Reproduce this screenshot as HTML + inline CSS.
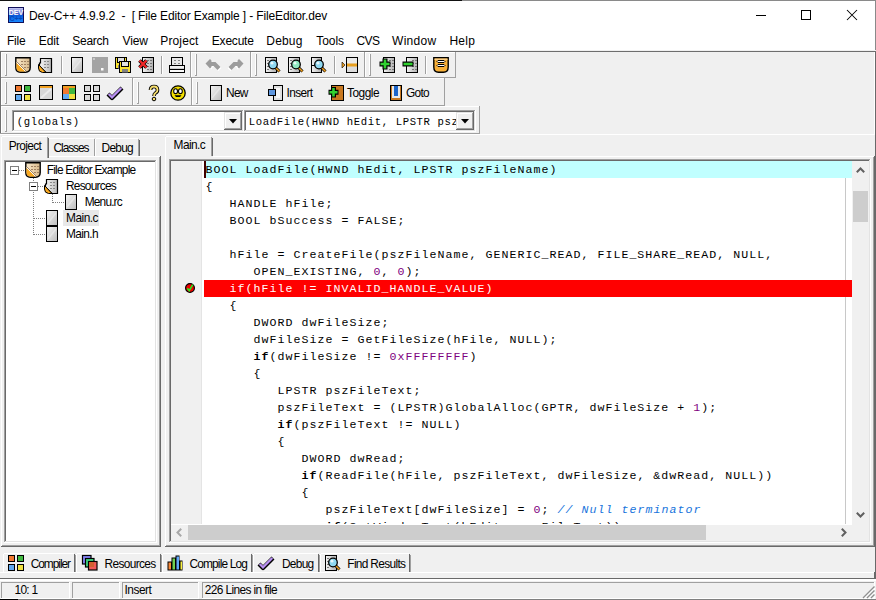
<!DOCTYPE html>
<html><head><meta charset="utf-8">
<style>
*{margin:0;padding:0;box-sizing:border-box}
html,body{width:876px;height:600px;overflow:hidden;background:#f0f0f0;font-family:"Liberation Sans",sans-serif;color:#000}
.a{position:absolute}
.mono{font-family:"Liberation Mono",monospace;white-space:pre}
svg{position:absolute;overflow:visible}
.k{font-weight:bold}
.n{color:#800080}
.c{color:#1874dc;font-style:italic}
</style></head><body>

<div class="a" style="left:0px;top:0px;width:462px;height:1px;background:#111;"></div>
<div class="a" style="left:462px;top:0px;width:414px;height:1px;background:#8a8a8a;"></div>
<div class="a" style="left:0px;top:1px;width:876px;height:50px;background:#fff;"></div>
<div class="a" style="left:875px;top:0px;width:1px;height:52px;background:#8a8a8a;"></div>
<svg style="left:8px;top:7px" width="16" height="16" viewBox="0 0 16 16"><defs><linearGradient id="ti1" x1="0" y1="0" x2="0" y2="1"><stop offset="0" stop-color="#c8c8f4"/><stop offset="1" stop-color="#2a48c0"/></linearGradient><linearGradient id="ti2" x1="0" y1="0" x2="0" y2="1"><stop offset="0" stop-color="#0a58d8"/><stop offset="1" stop-color="#1888ff"/></linearGradient></defs><rect x="0.5" y="0.5" width="15" height="15" fill="#10106a" stroke="#10105a"/><rect x="1" y="1" width="14" height="7" fill="url(#ti1)"/><rect x="1" y="8" width="14" height="7" fill="url(#ti2)"/><text x="8" y="7.6" text-anchor="middle" font-family="Liberation Sans" font-weight="bold" font-size="7" fill="#fff">DEV</text><text x="8" y="14" text-anchor="middle" font-family="Liberation Sans" font-weight="bold" font-size="7" fill="#0848b8">C++</text></svg>
<div class="a" style="left:29px;top:8.84px;font-size:12px;line-height:14px;white-space:pre;color:#000;letter-spacing:-0.134px;">Dev-C++ 4.9.9.2  -  [ File Editor Example ] - FileEditor.dev</div>
<div class="a" style="left:756px;top:15px;width:10px;height:1px;background:#000;"></div>
<div class="a" style="left:801px;top:10px;width:10px;height:10px;background:transparent;border:1px solid #000"></div>
<svg style="left:847px;top:10px" width="10" height="10" viewBox="0 0 10 10"><path d="M0 0L10 10M10 0L0 10" stroke="#000" stroke-width="1.05"/></svg>
<div class="a" style="left:6.9px;top:33.84px;font-size:12px;line-height:14px;white-space:pre;color:#000;letter-spacing:-0.186px;">File</div>
<div class="a" style="left:38.800000000000004px;top:33.84px;font-size:12px;line-height:14px;white-space:pre;color:#000;letter-spacing:-0.113px;">Edit</div>
<div class="a" style="left:72.3px;top:33.84px;font-size:12px;line-height:14px;white-space:pre;color:#000;letter-spacing:-0.259px;">Search</div>
<div class="a" style="left:122.5px;top:33.84px;font-size:12px;line-height:14px;white-space:pre;color:#000;letter-spacing:-0.134px;">View</div>
<div class="a" style="left:160.29999999999998px;top:33.84px;font-size:12px;line-height:14px;white-space:pre;color:#000;letter-spacing:0.128px;">Project</div>
<div class="a" style="left:211.8px;top:33.84px;font-size:12px;line-height:14px;white-space:pre;color:#000;letter-spacing:-0.206px;">Execute</div>
<div class="a" style="left:266.3px;top:33.84px;font-size:12px;line-height:14px;white-space:pre;color:#000;letter-spacing:0.170px;">Debug</div>
<div class="a" style="left:316.2px;top:33.84px;font-size:12px;line-height:14px;white-space:pre;color:#000;letter-spacing:-0.040px;">Tools</div>
<div class="a" style="left:356.4px;top:33.84px;font-size:12px;line-height:14px;white-space:pre;color:#000;letter-spacing:-0.583px;">CVS</div>
<div class="a" style="left:392.0px;top:33.84px;font-size:12px;line-height:14px;white-space:pre;color:#000;letter-spacing:0.316px;">Window</div>
<div class="a" style="left:449.4px;top:33.84px;font-size:12px;line-height:14px;white-space:pre;color:#000;letter-spacing:0.287px;">Help</div>
<div class="a" style="left:0px;top:50px;width:876px;height:1px;background:#f0f0f0;"></div>
<div class="a" style="left:0px;top:51px;width:876px;height:1px;background:#6e6e6e;"></div>
<div class="a" style="left:0px;top:52px;width:876px;height:82px;background:#f0f0f0;"></div>
<div class="a" style="left:874px;top:52px;width:1px;height:83px;background:#fff;"></div>
<div class="a" style="left:875px;top:52px;width:1px;height:83px;background:#6a6a6a;"></div>
<div class="a" style="left:0px;top:51px;width:1px;height:83px;background:#6e6e6e;"></div>
<div class="a" style="left:1px;top:52px;width:190px;height:1px;background:#fff;"></div>
<div class="a" style="left:1px;top:52px;width:1px;height:26px;background:#fff;"></div>
<div class="a" style="left:1px;top:77px;width:190px;height:1px;background:#a0a0a0;"></div>
<div class="a" style="left:190px;top:52px;width:1px;height:26px;background:#a0a0a0;"></div>
<div class="a" style="left:191px;top:52px;width:60px;height:1px;background:#fff;"></div>
<div class="a" style="left:191px;top:52px;width:1px;height:26px;background:#fff;"></div>
<div class="a" style="left:191px;top:77px;width:60px;height:1px;background:#a0a0a0;"></div>
<div class="a" style="left:250px;top:52px;width:1px;height:26px;background:#a0a0a0;"></div>
<div class="a" style="left:251px;top:52px;width:114px;height:1px;background:#fff;"></div>
<div class="a" style="left:251px;top:52px;width:1px;height:26px;background:#fff;"></div>
<div class="a" style="left:251px;top:77px;width:114px;height:1px;background:#a0a0a0;"></div>
<div class="a" style="left:364px;top:52px;width:1px;height:26px;background:#a0a0a0;"></div>
<div class="a" style="left:365px;top:52px;width:91px;height:1px;background:#fff;"></div>
<div class="a" style="left:365px;top:52px;width:1px;height:26px;background:#fff;"></div>
<div class="a" style="left:365px;top:77px;width:91px;height:1px;background:#a0a0a0;"></div>
<div class="a" style="left:455px;top:52px;width:1px;height:26px;background:#a0a0a0;"></div>
<div class="a" style="left:5px;top:54px;width:1px;height:22px;background:#fff;"></div>
<div class="a" style="left:6px;top:54px;width:1px;height:22px;background:#a0a0a0;"></div>
<div class="a" style="left:5px;top:75px;width:2px;height:1px;background:#a0a0a0;"></div>
<div class="a" style="left:5px;top:54px;width:1px;height:1px;background:#fff;"></div>
<div class="a" style="left:195px;top:54px;width:1px;height:22px;background:#fff;"></div>
<div class="a" style="left:196px;top:54px;width:1px;height:22px;background:#a0a0a0;"></div>
<div class="a" style="left:195px;top:75px;width:2px;height:1px;background:#a0a0a0;"></div>
<div class="a" style="left:195px;top:54px;width:1px;height:1px;background:#fff;"></div>
<div class="a" style="left:255px;top:54px;width:1px;height:22px;background:#fff;"></div>
<div class="a" style="left:256px;top:54px;width:1px;height:22px;background:#a0a0a0;"></div>
<div class="a" style="left:255px;top:75px;width:2px;height:1px;background:#a0a0a0;"></div>
<div class="a" style="left:255px;top:54px;width:1px;height:1px;background:#fff;"></div>
<div class="a" style="left:369px;top:54px;width:1px;height:22px;background:#fff;"></div>
<div class="a" style="left:370px;top:54px;width:1px;height:22px;background:#a0a0a0;"></div>
<div class="a" style="left:369px;top:75px;width:2px;height:1px;background:#a0a0a0;"></div>
<div class="a" style="left:369px;top:54px;width:1px;height:1px;background:#fff;"></div>
<div class="a" style="left:1px;top:78px;width:132px;height:1px;background:#fff;"></div>
<div class="a" style="left:1px;top:78px;width:1px;height:28px;background:#fff;"></div>
<div class="a" style="left:1px;top:105px;width:132px;height:1px;background:#a0a0a0;"></div>
<div class="a" style="left:132px;top:78px;width:1px;height:28px;background:#a0a0a0;"></div>
<div class="a" style="left:133px;top:78px;width:59px;height:1px;background:#fff;"></div>
<div class="a" style="left:133px;top:78px;width:1px;height:28px;background:#fff;"></div>
<div class="a" style="left:133px;top:105px;width:59px;height:1px;background:#a0a0a0;"></div>
<div class="a" style="left:191px;top:78px;width:1px;height:28px;background:#a0a0a0;"></div>
<div class="a" style="left:192px;top:78px;width:253px;height:1px;background:#fff;"></div>
<div class="a" style="left:192px;top:78px;width:1px;height:28px;background:#fff;"></div>
<div class="a" style="left:192px;top:105px;width:253px;height:1px;background:#a0a0a0;"></div>
<div class="a" style="left:444px;top:78px;width:1px;height:28px;background:#a0a0a0;"></div>
<div class="a" style="left:5px;top:82px;width:1px;height:22px;background:#fff;"></div>
<div class="a" style="left:6px;top:82px;width:1px;height:22px;background:#a0a0a0;"></div>
<div class="a" style="left:5px;top:103px;width:2px;height:1px;background:#a0a0a0;"></div>
<div class="a" style="left:5px;top:82px;width:1px;height:1px;background:#fff;"></div>
<div class="a" style="left:137px;top:82px;width:1px;height:22px;background:#fff;"></div>
<div class="a" style="left:138px;top:82px;width:1px;height:22px;background:#a0a0a0;"></div>
<div class="a" style="left:137px;top:103px;width:2px;height:1px;background:#a0a0a0;"></div>
<div class="a" style="left:137px;top:82px;width:1px;height:1px;background:#fff;"></div>
<div class="a" style="left:196px;top:82px;width:1px;height:22px;background:#fff;"></div>
<div class="a" style="left:197px;top:82px;width:1px;height:22px;background:#a0a0a0;"></div>
<div class="a" style="left:196px;top:103px;width:2px;height:1px;background:#a0a0a0;"></div>
<div class="a" style="left:196px;top:82px;width:1px;height:1px;background:#fff;"></div>
<div class="a" style="left:1px;top:106px;width:479px;height:1px;background:#fff;"></div>
<div class="a" style="left:1px;top:106px;width:1px;height:28px;background:#fff;"></div>
<div class="a" style="left:1px;top:133px;width:479px;height:1px;background:#a0a0a0;"></div>
<div class="a" style="left:479px;top:106px;width:1px;height:28px;background:#a0a0a0;"></div>
<div class="a" style="left:5px;top:110px;width:1px;height:22px;background:#fff;"></div>
<div class="a" style="left:6px;top:110px;width:1px;height:22px;background:#a0a0a0;"></div>
<div class="a" style="left:5px;top:131px;width:2px;height:1px;background:#a0a0a0;"></div>
<div class="a" style="left:5px;top:110px;width:1px;height:1px;background:#fff;"></div>
<div class="a" style="left:0px;top:133px;width:480px;height:1px;background:#a0a0a0;"></div>
<div class="a" style="left:0px;top:134px;width:874px;height:1px;background:#fff;"></div>
<div class="a" style="left:61px;top:56px;width:1px;height:18px;background:#a0a0a0;"></div>
<div class="a" style="left:62px;top:56px;width:1px;height:18px;background:#fff;"></div>
<div class="a" style="left:161px;top:56px;width:1px;height:18px;background:#a0a0a0;"></div>
<div class="a" style="left:162px;top:56px;width:1px;height:18px;background:#fff;"></div>
<div class="a" style="left:334px;top:56px;width:1px;height:18px;background:#a0a0a0;"></div>
<div class="a" style="left:335px;top:56px;width:1px;height:18px;background:#fff;"></div>
<div class="a" style="left:425px;top:56px;width:1px;height:18px;background:#a0a0a0;"></div>
<div class="a" style="left:426px;top:56px;width:1px;height:18px;background:#fff;"></div>
<svg style="left:15px;top:57px" width="16" height="16" viewBox="0 0 16 16"><defs><linearGradient id="g1" x1="0" y1="0" x2="1" y2="0"><stop offset="0" stop-color="#fcecd0"/><stop offset="1" stop-color="#d8b888"/></linearGradient></defs><path d="M0.8 0.8H15.2V10.5Q15.2 15.2 10.5 15.2H5.5Q0.8 15.2 0.8 10.5Z" fill="url(#g1)" stroke="#000" stroke-width="1.4"/><path d="M1.5 5.5L10.5 14.6H5.5Q1.5 14.6 1.5 10.5Z" fill="#f8a820"/><path d="M1.5 5.5L10.5 14.5" stroke="#fff" stroke-width="0.9"/><path d="M1.5 4.5L11 14" stroke="#806040" stroke-width="0.7"/><rect x="6" y="4" width="2" height="1" fill="#a08060"/><rect x="9" y="4" width="2" height="1" fill="#a08060"/><rect x="6" y="7" width="2" height="1" fill="#a08060"/><rect x="9" y="7" width="2" height="1" fill="#a08060"/><rect x="9" y="10" width="2" height="1" fill="#a08060"/><rect x="12" y="10" width="2" height="1" fill="#a08060"/><rect x="12" y="4" width="2" height="1" fill="#a08060"/><rect x="12" y="7" width="2" height="1" fill="#a08060"/></svg>
<svg style="left:37px;top:57px" width="16" height="16" viewBox="0 0 16 16"><defs><linearGradient id="g2" x1="0" y1="0" x2="1" y2="0"><stop offset="0" stop-color="#f8f8f8"/><stop offset="1" stop-color="#b8b8b8"/></linearGradient></defs><path d="M3.5 1.5H14.5V15.5H9L2.5 9.5V6H3.5Z" fill="url(#g2)" stroke="#000" stroke-width="1.2"/><path d="M1.5 7.5L9 15.5H5.5Q1.5 15 1.5 11Z" fill="#f8a820" stroke="#000" stroke-width="1"/><rect x="7" y="4" width="2" height="1" fill="#888"/><rect x="10" y="4" width="2" height="1" fill="#888"/><rect x="7" y="7" width="2" height="1" fill="#888"/><rect x="10" y="7" width="2" height="1" fill="#888"/><rect x="7" y="10" width="2" height="1" fill="#888"/><rect x="10" y="10" width="2" height="1" fill="#888"/></svg>
<svg style="left:71px;top:57px" width="12" height="16" viewBox="0 0 12 16"><defs><linearGradient id="g3" x1="0" y1="0" x2="1" y2="1"><stop offset="0" stop-color="#f4f4f4"/><stop offset="1" stop-color="#bcbcbc"/></linearGradient></defs><rect x="0.5" y="0.5" width="11" height="15" fill="url(#g3)" stroke="#000"/><path d="M2 13 L10 3" stroke="#fff" stroke-opacity="0.35" stroke-width="1.5"/></svg>
<svg style="left:92px;top:57px" width="16" height="16" viewBox="0 0 16 16"><rect x="0" y="0" width="16" height="16" fill="#a4a4a4"/><rect x="9" y="11" width="2.5" height="2.5" fill="#fff"/><rect x="1" y="1" width="2" height="2" fill="#c8c8c8"/></svg>
<svg style="left:115px;top:57px" width="16" height="16" viewBox="0 0 16 16"><rect x="0.5" y="0.5" width="11" height="11" fill="#f8e030" stroke="#000"/><rect x="2.5" y="0.5" width="7" height="5" fill="#e0e0e0" stroke="#000"/><rect x="3" y="8" width="6" height="3.5" fill="#808080"/><rect x="4.5" y="4.5" width="11" height="11" fill="#f8e030" stroke="#000"/><rect x="6.5" y="4.5" width="7" height="5" fill="#e0e0e0" stroke="#000"/><rect x="7" y="12" width="6" height="3.5" fill="#808080"/></svg>
<svg style="left:138px;top:57px" width="16" height="16" viewBox="0 0 16 16"><defs><linearGradient id="g4" x1="0" y1="0" x2="1" y2="0"><stop offset="0" stop-color="#f4f4f4"/><stop offset="1" stop-color="#b0b0b0"/></linearGradient></defs><rect x="4.5" y="0.5" width="11" height="15" fill="url(#g4)" stroke="#000"/><rect x="9" y="3" width="2" height="1" fill="#777"/><rect x="12" y="3" width="2" height="1" fill="#777"/><rect x="9" y="6" width="2" height="1" fill="#777"/><rect x="12" y="6" width="2" height="1" fill="#777"/><rect x="9" y="9" width="2" height="1" fill="#777"/><rect x="12" y="9" width="2" height="1" fill="#777"/><rect x="9" y="12" width="2" height="1" fill="#777"/><rect x="12" y="12" width="2" height="1" fill="#777"/><path d="M1.5 3.5L8.5 10.5M8.5 3.5L1.5 10.5" stroke="#000" stroke-width="3.8"/><path d="M1.5 3.5L8.5 10.5M8.5 3.5L1.5 10.5" stroke="#f02828" stroke-width="2.4"/></svg>
<svg style="left:169px;top:57px" width="16" height="16" viewBox="0 0 16 16"><rect x="2.5" y="0.5" width="11" height="8" fill="#e8e8e8" stroke="#000"/><rect x="5" y="3" width="2" height="1" fill="#888"/><rect x="9" y="3" width="2" height="1" fill="#888"/><rect x="5" y="6" width="2" height="1" fill="#888"/><rect x="9" y="6" width="2" height="1" fill="#888"/><rect x="0.5" y="8.5" width="15" height="7" fill="#d0d0d0" stroke="#000"/><rect x="1" y="9" width="14" height="2" fill="#f0f0f0"/><rect x="1" y="12" width="14" height="1" fill="#000"/><rect x="1" y="13" width="14" height="2" fill="#fafafa"/></svg>
<svg style="left:205px;top:57px" width="17" height="14" viewBox="0 0 17 14"><g ><path d="M0.5 6.5L5 2L6.5 3.5V5H10.5L15.5 10L12.5 13L8.5 9H6.5V10L5 11.5Z" fill="#fff" transform="translate(1,1)"/><path d="M0.5 6.5L5 2L6.5 3.5V5H10.5L15.5 10L12.5 13L8.5 9H6.5V10L5 11.5Z" fill="#9c9c9c"/></g></svg>
<svg style="left:228px;top:57px" width="17" height="14" viewBox="0 0 17 14"><g transform="translate(16,0) scale(-1,1)"><path d="M0.5 6.5L5 2L6.5 3.5V5H10.5L15.5 10L12.5 13L8.5 9H6.5V10L5 11.5Z" fill="#fff" transform="translate(1,1)"/><path d="M0.5 6.5L5 2L6.5 3.5V5H10.5L15.5 10L12.5 13L8.5 9H6.5V10L5 11.5Z" fill="#9c9c9c"/></g></svg>
<svg style="left:265px;top:57px" width="16" height="16" viewBox="0 0 16 16"><defs><linearGradient id="g5" x1="0" y1="0" x2="1" y2="0"><stop offset="0" stop-color="#f4f4f4"/><stop offset="1" stop-color="#b0b0b0"/></linearGradient></defs><rect x="0.5" y="0.5" width="11" height="15" fill="url(#g5)" stroke="#000"/><rect x="2" y="3" width="2" height="1" fill="#777"/><rect x="2" y="6" width="2" height="1" fill="#777"/><rect x="2" y="9" width="2" height="1" fill="#777"/><rect x="2" y="12" width="2" height="1" fill="#777"/><path d="M10 10L14.5 14.5" stroke="#000" stroke-width="3"/><path d="M10 10L14.5 14.5" stroke="#f0a020" stroke-width="1.6"/><circle cx="8" cy="7.5" r="4.3" fill="#8fd8f0" stroke="#000" stroke-width="1.3"/><circle cx="7" cy="6.2" r="1.4" fill="#fff" opacity="0.8"/></svg>
<svg style="left:288px;top:57px" width="16" height="16" viewBox="0 0 16 16"><defs><linearGradient id="g6" x1="0" y1="0" x2="1" y2="0"><stop offset="0" stop-color="#f4f4f4"/><stop offset="1" stop-color="#b0b0b0"/></linearGradient></defs><rect x="0.5" y="0.5" width="11" height="15" fill="url(#g6)" stroke="#000"/><rect x="2" y="3" width="2" height="1" fill="#777"/><rect x="2" y="6" width="2" height="1" fill="#777"/><rect x="2" y="9" width="2" height="1" fill="#777"/><rect x="2" y="12" width="2" height="1" fill="#777"/><path d="M10 10L14.5 14.5" stroke="#000" stroke-width="3"/><path d="M10 10L14.5 14.5" stroke="#f0a020" stroke-width="1.6"/><circle cx="8" cy="7.5" r="4.3" fill="#90e8c0" stroke="#000" stroke-width="1.3"/><circle cx="7" cy="6.2" r="1.4" fill="#fff" opacity="0.8"/></svg>
<svg style="left:311px;top:57px" width="16" height="16" viewBox="0 0 16 16"><defs><linearGradient id="g7" x1="0" y1="0" x2="1" y2="0"><stop offset="0" stop-color="#f4f4f4"/><stop offset="1" stop-color="#b0b0b0"/></linearGradient></defs><rect x="0.5" y="0.5" width="10" height="8" fill="url(#g7)" stroke="#000"/><rect x="0.5" y="8.5" width="10" height="7" fill="url(#g7)" stroke="#000"/><path d="M10 10L14.5 14.5" stroke="#000" stroke-width="3"/><path d="M10 10L14.5 14.5" stroke="#f0a020" stroke-width="1.6"/><circle cx="8" cy="7.5" r="4.3" fill="#8fd8f0" stroke="#000" stroke-width="1.3"/><circle cx="7" cy="6.2" r="1.4" fill="#fff" opacity="0.8"/></svg>
<svg style="left:342px;top:57px" width="16" height="16" viewBox="0 0 16 16"><path d="M0 5L3 8L0 11Z" fill="#f0a020" stroke="#000" stroke-width="0.6"/><rect x="4.5" y="0.5" width="11" height="15" fill="#e6e6e6" stroke="#000"/><rect x="5" y="7" width="10" height="2" fill="#f0a020"/><rect x="5" y="1" width="10" height="5" fill="#eaeaea"/><rect x="5" y="9" width="10" height="6" fill="#dcdcdc"/><rect x="5" y="6.5" width="10" height="3" fill="#e8a020"/></svg>
<svg style="left:379px;top:57px" width="16" height="16" viewBox="0 0 16 16"><defs><linearGradient id="g8" x1="0" y1="0" x2="1" y2="0"><stop offset="0" stop-color="#f4f4f4"/><stop offset="1" stop-color="#b0b0b0"/></linearGradient></defs><rect x="4.5" y="0.5" width="11" height="15" fill="url(#g8)" stroke="#000"/><rect x="10" y="3" width="2" height="1" fill="#777"/><rect x="13" y="3" width="2" height="1" fill="#777"/><rect x="10" y="6" width="2" height="1" fill="#777"/><rect x="13" y="6" width="2" height="1" fill="#777"/><rect x="10" y="9" width="2" height="1" fill="#777"/><rect x="13" y="9" width="2" height="1" fill="#777"/><rect x="10" y="12" width="2" height="1" fill="#777"/><rect x="13" y="12" width="2" height="1" fill="#777"/><path d="M6 1.5V12.5M0.5 7H11.5" stroke="#000" stroke-width="5"/><path d="M6 2.5V11.5M1.5 7H10.5" stroke="#30d030" stroke-width="2.6"/></svg>
<svg style="left:402px;top:57px" width="16" height="16" viewBox="0 0 16 16"><defs><linearGradient id="g9" x1="0" y1="0" x2="1" y2="0"><stop offset="0" stop-color="#f4f4f4"/><stop offset="1" stop-color="#b0b0b0"/></linearGradient></defs><rect x="4.5" y="0.5" width="11" height="15" fill="url(#g9)" stroke="#000"/><rect x="10" y="3" width="2" height="1" fill="#777"/><rect x="13" y="3" width="2" height="1" fill="#777"/><rect x="10" y="6" width="2" height="1" fill="#777"/><rect x="13" y="6" width="2" height="1" fill="#777"/><rect x="10" y="9" width="2" height="1" fill="#777"/><rect x="13" y="9" width="2" height="1" fill="#777"/><rect x="10" y="12" width="2" height="1" fill="#777"/><rect x="13" y="12" width="2" height="1" fill="#777"/><path d="M0.5 7H11.5" stroke="#000" stroke-width="5"/><path d="M1.5 7H10.5" stroke="#30d030" stroke-width="2.6"/></svg>
<svg style="left:433px;top:57px" width="16" height="16" viewBox="0 0 16 16"><path d="M0.8 0.8H15.2V10Q15.2 15.2 10.5 15.2H5.5Q0.8 15.2 0.8 10Z" fill="#f8b038" stroke="#000" stroke-width="1.4"/><path d="M1.5 1.5H14.5V3H1.5Z" fill="#fcd088"/><path d="M4 4.5L5 3.5H11L12 4.5L11 5.5H5Z" fill="#fff" stroke="#000" stroke-width="1"/><path d="M4 8.5L5 7.5H11L12 8.5L11 9.5H5Z" fill="#fff" stroke="#000" stroke-width="1"/></svg>
<svg style="left:15px;top:85px" width="16" height="16" viewBox="0 0 16 16"><rect x="0.5" y="0.5" width="6" height="6" fill="#f07830" stroke="#000"/><rect x="9.5" y="0.5" width="6" height="6" fill="#40b840" stroke="#000"/><rect x="0.5" y="9.5" width="6" height="6" fill="#60a8f0" stroke="#000"/><rect x="9.5" y="9.5" width="6" height="6" fill="#f0e040" stroke="#000"/></svg>
<svg style="left:39px;top:85px" width="14" height="15" viewBox="0 0 14 15"><rect x="0.5" y="0.5" width="13" height="14" fill="#d8d8d8" stroke="#000"/><rect x="1" y="1" width="12" height="2" fill="#f0a020"/><path d="M2 13L12 4" stroke="#fff" stroke-opacity="0.5" stroke-width="2"/></svg>
<svg style="left:62px;top:85px" width="14" height="15" viewBox="0 0 14 15"><rect x="0.5" y="0.5" width="13" height="14" fill="#d8d8d8" stroke="#000"/><rect x="1" y="1" width="12" height="2" fill="#f0a020"/><rect x="1" y="3" width="6" height="6" fill="#f07830"/><rect x="7" y="3" width="6" height="6" fill="#40b840"/><rect x="1" y="9" width="6" height="5" fill="#60a8f0"/><rect x="7" y="9" width="6" height="5" fill="#f0e040"/></svg>
<svg style="left:84px;top:85px" width="16" height="16" viewBox="0 0 16 16"><rect x="0.5" y="0.5" width="6" height="6" fill="#d8d8d8" stroke="#000"/><rect x="9.5" y="0.5" width="6" height="6" fill="#d8d8d8" stroke="#000"/><rect x="0.5" y="9.5" width="6" height="6" fill="#d8d8d8" stroke="#000"/><rect x="9.5" y="9.5" width="6" height="6" fill="#d8d8d8" stroke="#000"/></svg>
<svg style="left:107px;top:85px" width="16" height="16" viewBox="0 0 16 16"><path d="M1 9L5 13L15 3" fill="none" stroke="#000" stroke-width="4.2" stroke-linejoin="round"/><path d="M1.7 9L5 12.3L14.3 3" fill="none" stroke="#b890f0" stroke-width="2.4"/></svg>
<svg style="left:148px;top:85px" width="12" height="16" viewBox="0 0 12 16"><path d="M2.5 5Q2.5 1.5 6 1.5Q9.5 1.5 9.5 5Q9.5 7 7.5 8Q6 9 6 11" fill="none" stroke="#000" stroke-width="3.6"/><path d="M2.5 5Q2.5 1.5 6 1.5Q9.5 1.5 9.5 5Q9.5 7 7.5 8Q6 9 6 11" fill="none" stroke="#f8e070" stroke-width="1.8"/><circle cx="6" cy="14" r="1.8" fill="#f8e070" stroke="#000" stroke-width="1"/></svg>
<svg style="left:170px;top:85px" width="16" height="16" viewBox="0 0 16 16"><circle cx="8" cy="8" r="7.2" fill="#f4e000" stroke="#000" stroke-width="1.3"/><ellipse cx="5.6" cy="6.2" rx="1.9" ry="2.4" fill="#fff" stroke="#000" stroke-width="1.1"/><ellipse cx="10.4" cy="6.2" rx="1.9" ry="2.4" fill="#fff" stroke="#000" stroke-width="1.1"/><path d="M4.5 10.2H11.5L10 12H6Z" fill="#000"/></svg>
<svg style="left:210px;top:85px" width="12" height="16" viewBox="0 0 12 16"><defs><linearGradient id="g10" x1="0" y1="0" x2="1" y2="1"><stop offset="0" stop-color="#f4f4f4"/><stop offset="1" stop-color="#bcbcbc"/></linearGradient></defs><rect x="0.5" y="0.5" width="11" height="15" fill="url(#g10)" stroke="#000"/><path d="M2 13 L10 3" stroke="#fff" stroke-opacity="0.35" stroke-width="1.5"/></svg>
<div class="a" style="left:226px;top:85.87px;font-size:11.9px;line-height:14px;white-space:pre;color:#000;letter-spacing:-0.699px;">New</div>
<svg style="left:268px;top:85px" width="16" height="16" viewBox="0 0 16 16"><rect x="5.5" y="0.5" width="9" height="15" fill="#e0e0e0" stroke="#000"/><rect x="8" y="3" width="4" height="10" fill="#f8f8f8"/><rect x="0.5" y="4.5" width="7" height="6" fill="#6098e0" stroke="#000"/></svg>
<div class="a" style="left:286.5px;top:85.87px;font-size:11.9px;line-height:14px;white-space:pre;color:#000;letter-spacing:-0.620px;">Insert</div>
<svg style="left:328px;top:85px" width="16" height="16" viewBox="0 0 16 16"><rect x="3.5" y="0.5" width="12" height="15" fill="#c87820" stroke="#000"/><path d="M5.5 2V12.5M0.5 7.2H10.5" stroke="#000" stroke-width="5"/><path d="M5.5 3V11.5M1.5 7.2H9.5" stroke="#30d030" stroke-width="2.6"/></svg>
<div class="a" style="left:347px;top:85.87px;font-size:11.9px;line-height:14px;white-space:pre;color:#000;letter-spacing:-0.505px;">Toggle</div>
<svg style="left:390px;top:85px" width="12" height="16" viewBox="0 0 12 16"><rect x="0.5" y="0.5" width="11" height="15" fill="#c87820" stroke="#000"/><rect x="2" y="1" width="8" height="12" fill="#e8e8e8"/><rect x="4" y="1" width="4" height="10" fill="#1c64c8"/></svg>
<div class="a" style="left:406px;top:85.87px;font-size:11.9px;line-height:14px;white-space:pre;color:#000;letter-spacing:-0.741px;">Goto</div>
<div class="a" style="left:12px;top:110px;width:232px;height:22px;background:#fff;"></div>
<div class="a" style="left:12px;top:110px;width:232px;height:1px;background:#a0a0a0;"></div>
<div class="a" style="left:12px;top:110px;width:1px;height:22px;background:#a0a0a0;"></div>
<div class="a" style="left:13px;top:111px;width:230px;height:1px;background:#696969;"></div>
<div class="a" style="left:13px;top:111px;width:1px;height:20px;background:#696969;"></div>
<div class="a" style="left:12px;top:131px;width:232px;height:1px;background:#fff;"></div>
<div class="a" style="left:243px;top:110px;width:1px;height:22px;background:#fff;"></div>
<div class="a" style="left:13px;top:130px;width:230px;height:1px;background:#e3e3e3;"></div>
<div class="a" style="left:242px;top:111px;width:1px;height:20px;background:#e3e3e3;"></div>
<div class="a mono" style="left:16.7px;top:114.08px;font-size:10.6px;line-height:17px;letter-spacing:0.64px;">(globals)</div>
<div class="a" style="left:224px;top:112px;width:18px;height:18px;background:#f0f0f0;"></div>
<div class="a" style="left:224px;top:112px;width:18px;height:1px;background:#e3e3e3;"></div>
<div class="a" style="left:224px;top:112px;width:1px;height:18px;background:#e3e3e3;"></div>
<div class="a" style="left:225px;top:113px;width:16px;height:1px;background:#fff;"></div>
<div class="a" style="left:225px;top:113px;width:1px;height:16px;background:#fff;"></div>
<div class="a" style="left:224px;top:129px;width:18px;height:1px;background:#696969;"></div>
<div class="a" style="left:241px;top:112px;width:1px;height:18px;background:#696969;"></div>
<div class="a" style="left:225px;top:128px;width:16px;height:1px;background:#a0a0a0;"></div>
<div class="a" style="left:240px;top:113px;width:1px;height:16px;background:#a0a0a0;"></div>
<svg style="left:229.0px;top:119px" width="8" height="5" viewBox="0 0 8 5"><path d="M0 0H8L4 4.5Z" fill="#000"/></svg>
<div class="a" style="left:244px;top:110px;width:232px;height:22px;background:#fff;"></div>
<div class="a" style="left:244px;top:110px;width:232px;height:1px;background:#a0a0a0;"></div>
<div class="a" style="left:244px;top:110px;width:1px;height:22px;background:#a0a0a0;"></div>
<div class="a" style="left:245px;top:111px;width:230px;height:1px;background:#696969;"></div>
<div class="a" style="left:245px;top:111px;width:1px;height:20px;background:#696969;"></div>
<div class="a" style="left:244px;top:131px;width:232px;height:1px;background:#fff;"></div>
<div class="a" style="left:475px;top:110px;width:1px;height:22px;background:#fff;"></div>
<div class="a" style="left:245px;top:130px;width:230px;height:1px;background:#e3e3e3;"></div>
<div class="a" style="left:474px;top:111px;width:1px;height:20px;background:#e3e3e3;"></div>
<div class="a mono" style="left:248.7px;top:114.08px;font-size:10.6px;line-height:17px;letter-spacing:0.64px;">LoadFile(HWND hEdit, LPSTR psz</div>
<div class="a" style="left:456px;top:112px;width:18px;height:18px;background:#f0f0f0;"></div>
<div class="a" style="left:456px;top:112px;width:18px;height:1px;background:#e3e3e3;"></div>
<div class="a" style="left:456px;top:112px;width:1px;height:18px;background:#e3e3e3;"></div>
<div class="a" style="left:457px;top:113px;width:16px;height:1px;background:#fff;"></div>
<div class="a" style="left:457px;top:113px;width:1px;height:16px;background:#fff;"></div>
<div class="a" style="left:456px;top:129px;width:18px;height:1px;background:#696969;"></div>
<div class="a" style="left:473px;top:112px;width:1px;height:18px;background:#696969;"></div>
<div class="a" style="left:457px;top:128px;width:16px;height:1px;background:#a0a0a0;"></div>
<div class="a" style="left:472px;top:113px;width:1px;height:16px;background:#a0a0a0;"></div>
<svg style="left:461.0px;top:119px" width="8" height="5" viewBox="0 0 8 5"><path d="M0 0H8L4 4.5Z" fill="#000"/></svg>
<div class="a" style="left:1px;top:135px;width:875px;height:412px;background:#f0f0f0;"></div>
<div class="a" style="left:1px;top:156px;width:160px;height:1px;background:#fff;"></div>
<div class="a" style="left:1px;top:156px;width:1px;height:391px;background:#fff;"></div>
<div class="a" style="left:159px;top:157px;width:1px;height:389px;background:#a0a0a0;"></div>
<div class="a" style="left:160px;top:156px;width:1px;height:391px;background:#696969;"></div>
<div class="a" style="left:2px;top:545px;width:158px;height:1px;background:#a0a0a0;"></div>
<div class="a" style="left:1px;top:546px;width:160px;height:1px;background:#696969;"></div>
<div class="a" style="left:48px;top:138px;width:48px;height:18px;background:#f0f0f0;"></div>
<div class="a" style="left:49px;top:138px;width:45px;height:1px;background:#fff;"></div>
<div class="a" style="left:48px;top:139px;width:1px;height:17px;background:#fff;"></div>
<div class="a" style="left:94px;top:139px;width:1px;height:17px;background:#a0a0a0;"></div>
<div class="a" style="left:95px;top:140px;width:1px;height:16px;background:#696969;"></div>
<div class="a" style="left:53.5px;top:141.17px;font-size:11.9px;line-height:14px;white-space:pre;color:#000;letter-spacing:-1.045px;">Classes</div>
<div class="a" style="left:95px;top:138px;width:45px;height:18px;background:#f0f0f0;"></div>
<div class="a" style="left:96px;top:138px;width:42px;height:1px;background:#fff;"></div>
<div class="a" style="left:95px;top:139px;width:1px;height:17px;background:#fff;"></div>
<div class="a" style="left:138px;top:139px;width:1px;height:17px;background:#a0a0a0;"></div>
<div class="a" style="left:139px;top:140px;width:1px;height:16px;background:#696969;"></div>
<div class="a" style="left:101.5px;top:141.17px;font-size:11.9px;line-height:14px;white-space:pre;color:#000;letter-spacing:-0.706px;">Debug</div>
<div class="a" style="left:1px;top:136px;width:48px;height:22px;background:#f0f0f0;"></div>
<div class="a" style="left:2px;top:136px;width:45px;height:1px;background:#fff;"></div>
<div class="a" style="left:1px;top:137px;width:1px;height:21px;background:#fff;"></div>
<div class="a" style="left:47px;top:137px;width:1px;height:21px;background:#a0a0a0;"></div>
<div class="a" style="left:48px;top:138px;width:1px;height:20px;background:#696969;"></div>
<div class="a" style="left:8.7px;top:139.37px;font-size:11.9px;line-height:14px;white-space:pre;color:#000;letter-spacing:-0.643px;">Project</div>
<div class="a" style="left:4px;top:160px;width:153px;height:383px;background:#fff;"></div>
<div class="a" style="left:4px;top:160px;width:153px;height:1px;background:#a0a0a0;"></div>
<div class="a" style="left:4px;top:160px;width:1px;height:383px;background:#a0a0a0;"></div>
<div class="a" style="left:5px;top:161px;width:151px;height:1px;background:#696969;"></div>
<div class="a" style="left:5px;top:161px;width:1px;height:381px;background:#696969;"></div>
<div class="a" style="left:4px;top:542px;width:153px;height:1px;background:#fff;"></div>
<div class="a" style="left:156px;top:160px;width:1px;height:383px;background:#fff;"></div>
<div class="a" style="left:5px;top:541px;width:151px;height:1px;background:#e3e3e3;"></div>
<div class="a" style="left:155px;top:161px;width:1px;height:381px;background:#e3e3e3;"></div>
<div class="a" style="left:33px;top:178px;width:1px;height:57px;background:repeating-linear-gradient(180deg,#808080 0 1px,transparent 1px 2px)"></div>
<div class="a" style="left:19px;top:170px;width:6px;height:1px;background:repeating-linear-gradient(90deg,#808080 0 1px,transparent 1px 2px)"></div>
<div class="a" style="left:38px;top:186px;width:6px;height:1px;background:repeating-linear-gradient(90deg,#808080 0 1px,transparent 1px 2px)"></div>
<div class="a" style="left:52px;top:194px;width:1px;height:9px;background:repeating-linear-gradient(180deg,#808080 0 1px,transparent 1px 2px)"></div>
<div class="a" style="left:53px;top:202px;width:11px;height:1px;background:repeating-linear-gradient(90deg,#808080 0 1px,transparent 1px 2px)"></div>
<div class="a" style="left:34px;top:218px;width:11px;height:1px;background:repeating-linear-gradient(90deg,#808080 0 1px,transparent 1px 2px)"></div>
<div class="a" style="left:34px;top:234px;width:11px;height:1px;background:repeating-linear-gradient(90deg,#808080 0 1px,transparent 1px 2px)"></div>
<div class="a" style="left:10px;top:166px;width:9px;height:9px;background:#fff;border:1px solid #808080"></div>
<div class="a" style="left:12px;top:170px;width:5px;height:1px;background:#000;"></div>
<div class="a" style="left:29px;top:182px;width:9px;height:9px;background:#fff;border:1px solid #808080"></div>
<div class="a" style="left:31px;top:186px;width:5px;height:1px;background:#000;"></div>
<svg style="left:25px;top:162px" width="16" height="16" viewBox="0 0 16 16"><defs><linearGradient id="g11" x1="0" y1="0" x2="1" y2="0"><stop offset="0" stop-color="#fcecd0"/><stop offset="1" stop-color="#d8b888"/></linearGradient></defs><path d="M0.8 0.8H15.2V10.5Q15.2 15.2 10.5 15.2H5.5Q0.8 15.2 0.8 10.5Z" fill="url(#g11)" stroke="#000" stroke-width="1.4"/><path d="M1.5 5.5L10.5 14.6H5.5Q1.5 14.6 1.5 10.5Z" fill="#f8a820"/><path d="M1.5 5.5L10.5 14.5" stroke="#fff" stroke-width="0.9"/><path d="M1.5 4.5L11 14" stroke="#806040" stroke-width="0.7"/><rect x="6" y="4" width="2" height="1" fill="#a08060"/><rect x="9" y="4" width="2" height="1" fill="#a08060"/><rect x="6" y="7" width="2" height="1" fill="#a08060"/><rect x="9" y="7" width="2" height="1" fill="#a08060"/><rect x="9" y="10" width="2" height="1" fill="#a08060"/><rect x="12" y="10" width="2" height="1" fill="#a08060"/><rect x="12" y="4" width="2" height="1" fill="#a08060"/><rect x="12" y="7" width="2" height="1" fill="#a08060"/></svg>
<svg style="left:43px;top:178px" width="16" height="16" viewBox="0 0 16 16"><defs><linearGradient id="g12" x1="0" y1="0" x2="1" y2="0"><stop offset="0" stop-color="#f8f8f8"/><stop offset="1" stop-color="#b8b8b8"/></linearGradient></defs><path d="M3.5 1.5H14.5V15.5H9L2.5 9.5V6H3.5Z" fill="url(#g12)" stroke="#000" stroke-width="1.2"/><path d="M1.5 7.5L9 15.5H5.5Q1.5 15 1.5 11Z" fill="#f8a820" stroke="#000" stroke-width="1"/><rect x="7" y="4" width="2" height="1" fill="#888"/><rect x="10" y="4" width="2" height="1" fill="#888"/><rect x="7" y="7" width="2" height="1" fill="#888"/><rect x="10" y="7" width="2" height="1" fill="#888"/><rect x="7" y="10" width="2" height="1" fill="#888"/><rect x="10" y="10" width="2" height="1" fill="#888"/></svg>
<svg style="left:65px;top:194px" width="12" height="16" viewBox="0 0 12 16"><defs><linearGradient id="g13" x1="0" y1="0" x2="1" y2="1"><stop offset="0" stop-color="#f4f4f4"/><stop offset="1" stop-color="#bcbcbc"/></linearGradient></defs><rect x="0.5" y="0.5" width="11" height="15" fill="url(#g13)" stroke="#000"/><path d="M2 13 L10 3" stroke="#fff" stroke-opacity="0.35" stroke-width="1.5"/></svg>
<div class="a" style="left:63px;top:210px;width:36px;height:16px;background:#e8e8e8;"></div>
<svg style="left:46px;top:210px" width="12" height="16" viewBox="0 0 12 16"><defs><linearGradient id="g14" x1="0" y1="0" x2="1" y2="1"><stop offset="0" stop-color="#f4f4f4"/><stop offset="1" stop-color="#bcbcbc"/></linearGradient></defs><rect x="0.5" y="0.5" width="11" height="15" fill="url(#g14)" stroke="#000"/><path d="M2 13 L10 3" stroke="#fff" stroke-opacity="0.35" stroke-width="1.5"/></svg>
<svg style="left:46px;top:226px" width="12" height="16" viewBox="0 0 12 16"><defs><linearGradient id="g15" x1="0" y1="0" x2="1" y2="1"><stop offset="0" stop-color="#f4f4f4"/><stop offset="1" stop-color="#bcbcbc"/></linearGradient></defs><rect x="0.5" y="0.5" width="11" height="15" fill="url(#g15)" stroke="#000"/><path d="M2 13 L10 3" stroke="#fff" stroke-opacity="0.35" stroke-width="1.5"/></svg>
<div class="a" style="left:46.7px;top:163.17px;font-size:11.9px;line-height:14px;white-space:pre;color:#000;letter-spacing:-0.756px;">File Editor Example</div>
<div class="a" style="left:66px;top:179.17px;font-size:11.9px;line-height:14px;white-space:pre;color:#000;letter-spacing:-0.760px;">Resources</div>
<div class="a" style="left:84.8px;top:195.17px;font-size:11.9px;line-height:14px;white-space:pre;color:#000;letter-spacing:-0.848px;">Menu.rc</div>
<div class="a" style="left:66px;top:211.37px;font-size:11.9px;line-height:14px;white-space:pre;color:#000;letter-spacing:-0.503px;">Main.c</div>
<div class="a" style="left:66px;top:227.37px;font-size:11.9px;line-height:14px;white-space:pre;color:#000;letter-spacing:-0.612px;">Main.h</div>
<div class="a" style="left:165px;top:156px;width:709px;height:1px;background:#fff;"></div>
<div class="a" style="left:165px;top:156px;width:1px;height:391px;background:#fff;"></div>
<div class="a" style="left:873px;top:157px;width:1px;height:389px;background:#a0a0a0;"></div>
<div class="a" style="left:874px;top:156px;width:1px;height:391px;background:#696969;"></div>
<div class="a" style="left:875px;top:135px;width:1px;height:444px;background:#696969;"></div>
<div class="a" style="left:166px;top:545px;width:708px;height:1px;background:#a0a0a0;"></div>
<div class="a" style="left:165px;top:546px;width:710px;height:1px;background:#696969;"></div>
<div class="a" style="left:166px;top:136px;width:47px;height:21px;background:#f0f0f0;"></div>
<div class="a" style="left:166px;top:136px;width:45px;height:1px;background:#fff;"></div>
<div class="a" style="left:165px;top:137px;width:1px;height:20px;background:#fff;"></div>
<div class="a" style="left:211px;top:137px;width:1px;height:19px;background:#a0a0a0;"></div>
<div class="a" style="left:212px;top:138px;width:1px;height:18px;background:#696969;"></div>
<div class="a" style="left:173.6px;top:138.27px;font-size:11.9px;line-height:14px;white-space:pre;color:#000;letter-spacing:-0.569px;">Main.c</div>
<div class="a" style="left:169px;top:159px;width:702px;height:384px;background:#fff;"></div>
<div class="a" style="left:169px;top:159px;width:702px;height:1px;background:#a0a0a0;"></div>
<div class="a" style="left:169px;top:159px;width:1px;height:384px;background:#a0a0a0;"></div>
<div class="a" style="left:170px;top:160px;width:700px;height:1px;background:#696969;"></div>
<div class="a" style="left:170px;top:160px;width:1px;height:382px;background:#696969;"></div>
<div class="a" style="left:169px;top:542px;width:702px;height:1px;background:#fff;"></div>
<div class="a" style="left:870px;top:159px;width:1px;height:384px;background:#fff;"></div>
<div class="a" style="left:170px;top:541px;width:700px;height:1px;background:#e3e3e3;"></div>
<div class="a" style="left:869px;top:160px;width:1px;height:382px;background:#e3e3e3;"></div>
<div class="a" style="left:171px;top:161px;width:30px;height:363px;background:#f0f0f0;"></div>
<div class="a" style="left:201px;top:161px;width:1px;height:363px;background:#e4e4e4;"></div>
<div class="a" style="left:202px;top:161px;width:650px;height:363px;background:#fff;"></div>
<div class="a" style="left:204px;top:161px;width:648px;height:17px;background:#c0ffff;"></div>
<div class="a" style="left:204px;top:280px;width:648px;height:17px;background:#ff0000;"></div>
<div class="a" style="left:845px;top:178px;width:1px;height:102px;background:#c8c8c8;"></div>
<div class="a" style="left:845px;top:297px;width:1px;height:227px;background:#c8c8c8;"></div>
<div class="a" style="left:204px;top:161px;width:2px;height:17px;background:#400000;"></div>
<svg style="left:185px;top:283px" width="10" height="10" viewBox="0 0 10 10"><circle cx="5" cy="5" r="4.4" fill="#f00000" stroke="#000" stroke-width="1.2"/><path d="M2.3 5.3L4.2 7.6L7.8 1.6" fill="none" stroke="#20f020" stroke-width="1.5"/></svg>
<div class="a" style="left:202px;top:161px;width:650px;height:363px;overflow:hidden">
<div class="a mono" style="left:3.52px;top:0.06px;font-size:11.6px;line-height:17px;letter-spacing:1.040px">BOOL LoadFile(HWND hEdit, LPSTR pszFileName)
{
   HANDLE hFile;
   BOOL bSuccess = FALSE;

   hFile = CreateFile(pszFileName, GENERIC_READ, FILE_SHARE_READ, NULL,
      OPEN_EXISTING, <span class="n">0</span>, <span class="n">0</span>);
<span style="color:#fff">   if(hFile != INVALID_HANDLE_VALUE)</span>
   {
      DWORD dwFileSize;
      dwFileSize = GetFileSize(hFile, NULL);
      <span class="k">if</span>(dwFileSize != <span class="n">0xFFFFFFFF</span>)
      {
         LPSTR pszFileText;
         pszFileText = (LPSTR)GlobalAlloc(GPTR, dwFileSize + <span class="n">1</span>);
         <span class="k">if</span>(pszFileText != NULL)
         {
            DWORD dwRead;
            <span class="k">if</span>(ReadFile(hFile, pszFileText, dwFileSize, &amp;dwRead, NULL))
            {
               pszFileText[dwFileSize] = <span class="n">0</span>; <span class="c">// Null terminator</span>
               <span class="k">if</span>(SetWindowText(hEdit, pszFileText))</div></div>
<div class="a" style="left:852px;top:161px;width:17px;height:363px;background:#f0f0f0;"></div>
<div class="a" style="left:853px;top:191px;width:15px;height:31px;background:#cdcdcd;"></div>
<svg style="left:856px;top:167px" width="9" height="6" viewBox="0 0 9 6"><path d="M0.8 5.2L4.5 1.5L8.2 5.2" fill="none" stroke="#606060" stroke-width="2"/></svg>
<svg style="left:856px;top:512px" width="9" height="6" viewBox="0 0 9 6"><path d="M0.8 0.8L4.5 4.5L8.2 0.8" fill="none" stroke="#606060" stroke-width="2"/></svg>
<div class="a" style="left:171px;top:524px;width:681px;height:17px;background:#f0f0f0;"></div>
<div class="a" style="left:171px;top:524px;width:681px;height:1px;background:#fff;"></div>
<div class="a" style="left:188px;top:525px;width:518px;height:15px;background:#cdcdcd;"></div>
<svg style="left:176px;top:528px" width="6" height="9" viewBox="0 0 6 9"><path d="M5.2 0.8L1.5 4.5L5.2 8.2" fill="none" stroke="#a8a8a8" stroke-width="2"/></svg>
<svg style="left:841px;top:528px" width="6" height="9" viewBox="0 0 6 9"><path d="M0.8 0.8L4.5 4.5L0.8 8.2" fill="none" stroke="#606060" stroke-width="2"/></svg>
<div class="a" style="left:852px;top:524px;width:17px;height:17px;background:#f0f0f0;"></div>
<div class="a" style="left:0px;top:547px;width:876px;height:31px;background:#f0f0f0;"></div>
<div class="a" style="left:4px;top:553px;width:70px;height:1px;background:#fff;"></div>
<div class="a" style="left:3px;top:554px;width:1px;height:18px;background:#fff;"></div>
<div class="a" style="left:74px;top:554px;width:1px;height:18px;background:#696969;"></div>
<div class="a" style="left:75px;top:555px;width:1px;height:17px;background:#a0a0a0;"></div>
<svg style="left:8px;top:555px" width="16" height="16" viewBox="0 0 16 16"><rect x="0.5" y="0.5" width="6" height="6" fill="#f07830" stroke="#000"/><rect x="9.5" y="0.5" width="6" height="6" fill="#40b840" stroke="#000"/><rect x="0.5" y="9.5" width="6" height="6" fill="#60a8f0" stroke="#000"/><rect x="9.5" y="9.5" width="6" height="6" fill="#f0e040" stroke="#000"/></svg>
<div class="a" style="left:30.7px;top:557.07px;font-size:11.9px;line-height:14px;white-space:pre;color:#000;letter-spacing:-1.033px;">Compiler</div>
<div class="a" style="left:77px;top:553px;width:83px;height:1px;background:#fff;"></div>
<div class="a" style="left:76px;top:554px;width:1px;height:18px;background:#fff;"></div>
<div class="a" style="left:160px;top:554px;width:1px;height:18px;background:#696969;"></div>
<div class="a" style="left:161px;top:555px;width:1px;height:17px;background:#a0a0a0;"></div>
<svg style="left:82px;top:555px" width="16" height="16" viewBox="0 0 16 16"><rect x="0.5" y="0.5" width="8.5" height="8.5" fill="#8888f8" stroke="#000" stroke-width="1.2"/><rect x="3.5" y="3.5" width="8.5" height="8.5" fill="#40d880" stroke="#000" stroke-width="1.2"/><rect x="6.5" y="6.5" width="8.5" height="8.5" fill="#f05858" stroke="#000" stroke-width="1.2"/><rect x="7" y="7" width="5" height="5" fill="#d06030"/></svg>
<div class="a" style="left:104.5px;top:557.07px;font-size:11.9px;line-height:14px;white-space:pre;color:#000;letter-spacing:-0.649px;">Resources</div>
<div class="a" style="left:163px;top:553px;width:88px;height:1px;background:#fff;"></div>
<div class="a" style="left:162px;top:554px;width:1px;height:18px;background:#fff;"></div>
<div class="a" style="left:251px;top:554px;width:1px;height:18px;background:#696969;"></div>
<div class="a" style="left:252px;top:555px;width:1px;height:17px;background:#a0a0a0;"></div>
<svg style="left:167px;top:555px" width="16" height="16" viewBox="0 0 16 16"><path d="M0.5 15.5V6.5H4.5V15.5ZM4.5 15.5V2.5H8.5V15.5ZM8.5 15.5V0.5H12.5V15.5ZM12.5 15.5V5.5H15.5V15.5Z" fill="#000"/><rect x="1.5" y="7.5" width="2.5" height="7" fill="#f88838"/><rect x="5.5" y="3.5" width="2.5" height="11" fill="#70d050"/><rect x="9.5" y="1.5" width="2.5" height="13" fill="#60a8f8"/><rect x="13.5" y="6.5" width="1.5" height="8" fill="#f8f040"/></svg>
<div class="a" style="left:189.5px;top:557.07px;font-size:11.9px;line-height:14px;white-space:pre;color:#000;letter-spacing:-0.839px;">Compile Log</div>
<div class="a" style="left:254px;top:553px;width:64px;height:1px;background:#fff;"></div>
<div class="a" style="left:253px;top:554px;width:1px;height:18px;background:#fff;"></div>
<div class="a" style="left:318px;top:554px;width:1px;height:18px;background:#696969;"></div>
<div class="a" style="left:319px;top:555px;width:1px;height:17px;background:#a0a0a0;"></div>
<svg style="left:258px;top:555px" width="16" height="16" viewBox="0 0 16 16"><path d="M1 9L5 13L15 3" fill="none" stroke="#000" stroke-width="4.2" stroke-linejoin="round"/><path d="M1.7 9L5 12.3L14.3 3" fill="none" stroke="#b890f0" stroke-width="2.4"/></svg>
<div class="a" style="left:282px;top:557.07px;font-size:11.9px;line-height:14px;white-space:pre;color:#000;letter-spacing:-0.726px;">Debug</div>
<div class="a" style="left:321px;top:553px;width:88px;height:1px;background:#fff;"></div>
<div class="a" style="left:320px;top:554px;width:1px;height:18px;background:#fff;"></div>
<div class="a" style="left:409px;top:554px;width:1px;height:18px;background:#696969;"></div>
<div class="a" style="left:410px;top:555px;width:1px;height:17px;background:#a0a0a0;"></div>
<svg style="left:325px;top:555px" width="16" height="16" viewBox="0 0 16 16"><defs><linearGradient id="g16" x1="0" y1="0" x2="1" y2="0"><stop offset="0" stop-color="#f4f4f4"/><stop offset="1" stop-color="#b0b0b0"/></linearGradient></defs><rect x="0.5" y="0.5" width="11" height="15" fill="url(#g16)" stroke="#000"/><rect x="2" y="3" width="2" height="1" fill="#777"/><rect x="2" y="6" width="2" height="1" fill="#777"/><rect x="2" y="9" width="2" height="1" fill="#777"/><rect x="2" y="12" width="2" height="1" fill="#777"/><path d="M10 10L14.5 14.5" stroke="#000" stroke-width="3"/><path d="M10 10L14.5 14.5" stroke="#f0a020" stroke-width="1.6"/><circle cx="8" cy="7.5" r="4.3" fill="#8fd8f0" stroke="#000" stroke-width="1.3"/><circle cx="7" cy="6.2" r="1.4" fill="#fff" opacity="0.8"/></svg>
<div class="a" style="left:347.3px;top:557.07px;font-size:11.9px;line-height:14px;white-space:pre;color:#000;letter-spacing:-0.673px;">Find Results</div>
<div class="a" style="left:0px;top:572px;width:874px;height:1px;background:#fff;"></div>
<div class="a" style="left:875px;top:547px;width:1px;height:33px;background:#696969;"></div>
<div class="a" style="left:874px;top:572px;width:1px;height:7px;background:#696969;"></div>
<div class="a" style="left:0px;top:578px;width:876px;height:1px;background:#696969;"></div>
<div class="a" style="left:0px;top:579px;width:876px;height:1px;background:#fff;"></div>
<div class="a" style="left:0px;top:580px;width:876px;height:19px;background:#f0f0f0;"></div>
<div class="a" style="left:0px;top:580px;width:876px;height:1px;background:#fff;"></div>
<div class="a" style="left:1px;top:582px;width:69px;height:1px;background:#a0a0a0;"></div>
<div class="a" style="left:1px;top:582px;width:1px;height:16px;background:#a0a0a0;"></div>
<div class="a" style="left:1px;top:598px;width:69px;height:1px;background:#fff;"></div>
<div class="a" style="left:69px;top:582px;width:1px;height:17px;background:#fff;"></div>
<div class="a" style="left:72px;top:582px;width:48px;height:1px;background:#a0a0a0;"></div>
<div class="a" style="left:72px;top:582px;width:1px;height:16px;background:#a0a0a0;"></div>
<div class="a" style="left:72px;top:598px;width:48px;height:1px;background:#fff;"></div>
<div class="a" style="left:119px;top:582px;width:1px;height:17px;background:#fff;"></div>
<div class="a" style="left:122px;top:582px;width:77px;height:1px;background:#a0a0a0;"></div>
<div class="a" style="left:122px;top:582px;width:1px;height:16px;background:#a0a0a0;"></div>
<div class="a" style="left:122px;top:598px;width:77px;height:1px;background:#fff;"></div>
<div class="a" style="left:198px;top:582px;width:1px;height:17px;background:#fff;"></div>
<div class="a" style="left:202px;top:582px;width:673px;height:1px;background:#a0a0a0;"></div>
<div class="a" style="left:202px;top:582px;width:1px;height:16px;background:#a0a0a0;"></div>
<div class="a" style="left:202px;top:598px;width:673px;height:1px;background:#fff;"></div>
<div class="a" style="left:874px;top:582px;width:1px;height:17px;background:#fff;"></div>
<div class="a" style="left:14.5px;top:583.37px;font-size:11.9px;line-height:14px;white-space:pre;color:#000;letter-spacing:-0.684px;">10: 1</div>
<div class="a" style="left:124.4px;top:583.37px;font-size:11.9px;line-height:14px;white-space:pre;color:#000;letter-spacing:-0.453px;">Insert</div>
<div class="a" style="left:204.7px;top:583.37px;font-size:11.9px;line-height:14px;white-space:pre;color:#000;letter-spacing:-0.605px;">226 Lines in file</div>
<svg style="left:862px;top:585px" width="13" height="14" viewBox="0 0 13 14"><path d="M12.5 1.5L1 13M12.5 5.5L5 13M12.5 9.5L9 13" stroke="#909090" stroke-width="1.4"/><path d="M12.5 3.3L2.8 13M12.5 7.3L6.8 13M12.5 11.3L10.8 13" stroke="#fff" stroke-width="1"/></svg>
<div class="a" style="left:0px;top:599px;width:18px;height:1px;background:#000;"></div>
<div class="a" style="left:18px;top:599px;width:858px;height:1px;background:#808080;"></div>
</body></html>
